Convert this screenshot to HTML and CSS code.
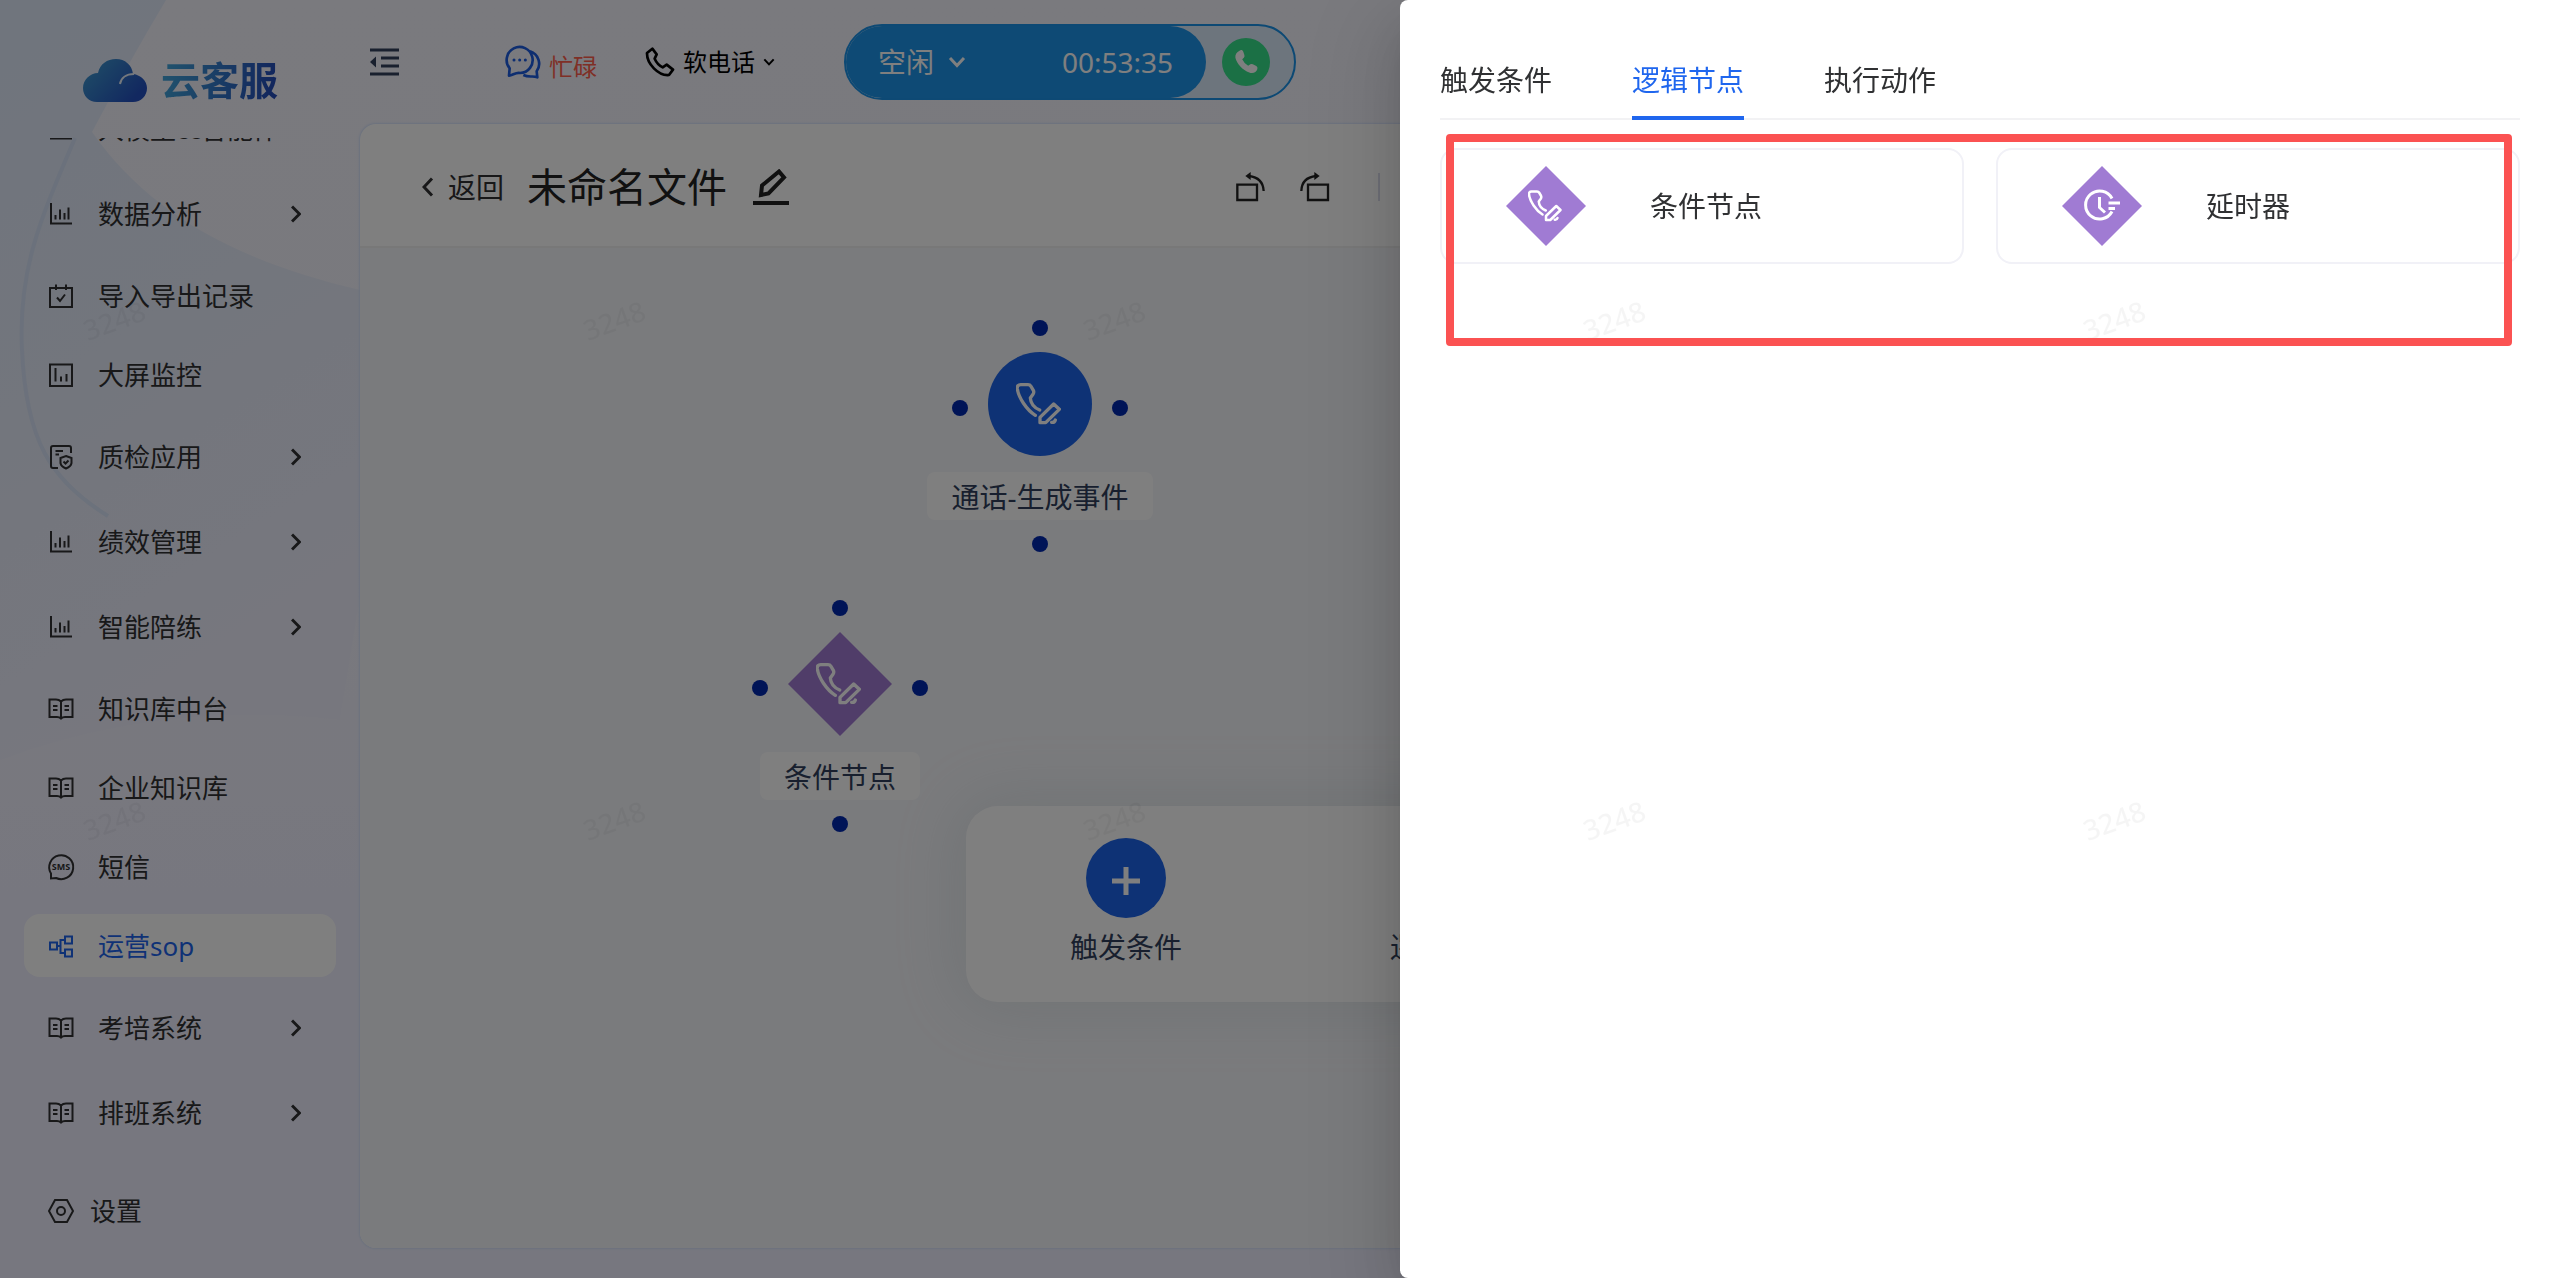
FILE: index.html
```html
<!DOCTYPE html>
<html lang="zh-CN">
<head>
<meta charset="utf-8">
<title>云客服</title>
<link rel="stylesheet" href="styles.css">
</head>
<body>
<svg class="symbols" aria-hidden="true">
  <symbol id="i-chart" viewBox="0 0 26 26"><path d="M3 2V22.500H24M7.500 18.500V14M12 18.500V8.500M16.500 18.500V12M20.500 18.500V6.500"/></symbol>
  <symbol id="i-calendar" viewBox="0 0 26 26"><path d="M2 5H24V24H2ZM8 1.500V7M18 1.500V7M9 14.500L12 18L17 11.500"/></symbol>
  <symbol id="i-screen" viewBox="0 0 26 26"><path d="M2 2.500H24V24H2ZM7.500 6V19.500M13 14.500V19.500M18.500 12V19.500"/></symbol>
  <symbol id="i-quality" viewBox="0 0 26 26"><path d="M10 24H5Q3 24 3 22V4Q3 2 5 2H21Q23 2 23 4V9M7.500 7H15M7.500 10.500H11M18 12L23.500 14V19Q23 22.500 18 24.500Q13 22.500 12.500 19V14ZM15.500 17.500L17.500 19.500L20.500 16.500"/></symbol>
  <symbol id="i-book" viewBox="0 0 26 26"><path d="M13 5.500C11.500 4 10 3.500 8 3.500H1.500V21H9C11 21 12 21.500 13 22.500C14 21.500 15 21 17 21H24.500V3.500H18C16 3.500 14.500 4 13 5.500ZM13 5.500V22M5 10H9.500M5 14H9.500M16.500 10H21M16.500 14H21"/></symbol>
  <symbol id="i-flow" viewBox="0 0 26 26"><path d="M2 9.500H9V16.500H2ZM17 3.500H24V10.500H17ZM17 16.500H24V23.500H17ZM9 13H12.500M17 7H12.500V20H17"/></symbol>
  <symbol id="i-setting" viewBox="0 0 26 26"><path d="M7 2H19L25 13L19 24H7L1 13ZM13 9A4 4 0 1 1 13 17A4 4 0 1 1 13 9Z"/></symbol>
  <symbol id="i-right" viewBox="0 0 10 18"><path d="M1 1.500L8.500 9L1 16.500"/></symbol>
  <symbol id="i-down" viewBox="0 0 18 12"><path d="M2 2L9 9.500L16 2"/></symbol>
  <symbol id="i-call-edit" viewBox="78 60 144 144"><path d="M136 166C110 150 85 112 82 86Q81 74 92 74H114Q120 74 123 79L130 91Q133 97 129 103L121 114C122 130 132 143 149 150M150 188V172L191 132L208 148L167 188ZM185 187Q194 188 196 180"/></symbol>
  <symbol id="i-delay" viewBox="0 0 36 36"><path d="M28 10.500A14 14 0 1 0 28 23.500M24.500 15H36M24.500 20.500H31M15.500 9V19.500L21 24.500"/></symbol>
</svg>

<svg class="backdrop" viewBox="0 0 360 1278" preserveAspectRatio="xMinYMin slice" aria-hidden="true">
  <defs>
    <linearGradient id="sky" x1="0" y1="0" x2=".3" y2="1">
      <stop offset="0" stop-color="#e0eafa"/><stop offset=".5" stop-color="#e6ecfa"/><stop offset="1" stop-color="#efeffd"/>
    </linearGradient>
  </defs>
  <path d="M0 0H166Q130 60 92 132C150 215 240 262 360 290V596L340 720Q160 700 0 760Z" fill="url(#sky)"/>
  <path d="M75 138C40 220 18 270 22 350C26 440 50 480 108 516" fill="none" stroke="#d2dff6" stroke-width="4" opacity=".7"/>
</svg>

<div class="app">
  <aside class="sidebar">
    <div class="brand">
      <svg class="brand-logo" viewBox="0 0 64 43" aria-hidden="true">
        <defs><linearGradient id="cloud" x1="0" y1="0" x2="1" y2=".6"><stop offset="0" stop-color="#40a0d0"/><stop offset="1" stop-color="#2450c0"/></linearGradient></defs>
        <path fill="url(#cloud)" d="M14 43C6 43 0 37 0 29C0 21 7 14 15 14C17 5 24 0 33 0C42 0 49 6 50 15C58 16 64 22 64 29C64 37 58 43 50 43Z"/>
        <path fill="none" stroke="#e8f0fa" stroke-width="2" d="M37 25C38 19 43 15 51 15"/>
      </svg>
      <span class="brand-name">云客服</span>
    </div>
    <nav class="menu" aria-label="主菜单">
      <div class="menu-list">
        <a class="item sub" href="#"><svg class="icon"><use href="#i-chart"/></svg><span>大模型cc智能体</span></a>
        <a class="item sub" href="#"><svg class="icon"><use href="#i-chart"/></svg><span>数据分析</span><svg class="arrow"><use href="#i-right"/></svg></a>
        <a class="item" href="#"><svg class="icon"><use href="#i-calendar"/></svg><span>导入导出记录</span></a>
        <a class="item" href="#"><svg class="icon"><use href="#i-screen"/></svg><span>大屏监控</span></a>
        <a class="item sub" href="#"><svg class="icon"><use href="#i-quality"/></svg><span>质检应用</span><svg class="arrow"><use href="#i-right"/></svg></a>
        <a class="item sub" href="#"><svg class="icon"><use href="#i-chart"/></svg><span>绩效管理</span><svg class="arrow"><use href="#i-right"/></svg></a>
        <a class="item sub" href="#"><svg class="icon"><use href="#i-chart"/></svg><span>智能陪练</span><svg class="arrow"><use href="#i-right"/></svg></a>
        <a class="item" href="#"><svg class="icon"><use href="#i-book"/></svg><span>知识库中台</span></a>
        <a class="item" href="#"><svg class="icon"><use href="#i-book"/></svg><span>企业知识库</span></a>
        <a class="item" href="#"><svg class="icon" viewBox="0 0 26 26"><path d="M3 19.500A12 12 0 1 1 8 24L3 24.500Z"/><text class="sms-text" x="13" y="16" text-anchor="middle">SMS</text></svg><span>短信</span></a>
        <a class="item active" href="#" aria-current="page"><svg class="icon"><use href="#i-flow"/></svg><span>运营sop</span></a>
        <a class="item sub" href="#"><svg class="icon"><use href="#i-book"/></svg><span>考培系统</span><svg class="arrow"><use href="#i-right"/></svg></a>
        <a class="item sub" href="#"><svg class="icon"><use href="#i-book"/></svg><span>排班系统</span><svg class="arrow"><use href="#i-right"/></svg></a>
      </div>
    </nav>
    <a class="item settings" href="#"><svg class="icon"><use href="#i-setting"/></svg><span>设置</span></a>
  </aside>

  <div class="main">
    <header class="topbar">
      <button class="plain" type="button" aria-label="收起菜单">
        <svg class="fold" viewBox="0 0 30 28"><path class="line" d="M0 2H29M11 10H29M11 18H29M0 26H29"/><path d="M0 14L6 8.500V19.500Z"/></svg>
      </button>
      <button class="plain chat" type="button">
        <svg class="chat-icon" viewBox="40 40 108 108"><path d="M55 135L57 113A39 39 0 1 1 88 127C76 124 66 134 55 135ZM118 62A39 39 0 0 1 138 122L140 140C126 134 116 142 98 133"/><path class="dots" d="M70 88H70.100M87 88H87.100M104 88H104.100"/></svg>
        <span>忙碌</span>
      </button>
      <button class="plain phone" type="button">
        <svg class="phone-icon" viewBox="465 45 90 90"><path d="M487 50L500 67L494 80Q502 98 518 106L530 98L549 113L537 129C505 132 470 95 471 63Z"/></svg>
        <span>软电话</span>
        <svg class="caret"><use href="#i-down"/></svg>
      </button>
      <div class="dialer">
        <button class="status" type="button">
          <span>空闲</span>
          <svg class="status-caret"><use href="#i-down"/></svg>
          <time>00:53:35</time>
        </button>
        <button class="call" type="button" aria-label="拨打">
          <svg viewBox="0 0 24 24"><path d="M6 1.500C7.500 .500 9 1 9.500 2.500L10.500 5.500Q11 7 10 8L8.500 9.500Q10 13 14 15.500L16 14Q17 13.500 18.300 14L21.500 15.700Q23 16.700 22.500 18.500C21.500 21.500 18.500 23 15 21.700C9 19.500 3.500 13.500 2.200 8C1.800 5 3.500 2.800 6 1.500Z"/></svg>
        </button>
      </div>
    </header>

    <main class="panel">
      <div class="panel-head">
        <button class="plain back" type="button"><svg viewBox="0 0 12 20"><path d="M10 1.500L2 10L10 18.500"/></svg><span>返回</span></button>
        <h1>未命名文件</h1>
        <button class="plain rename" type="button" aria-label="重命名"><svg viewBox="0 0 36 36"><path d="M8 26L9 16.500L26 2.500L31 8.500L15.500 24.500ZM0 34H36"/></svg></button>
        <div class="tools">
          <button class="plain" type="button" aria-label="撤销"><svg viewBox="100 30 96 96"><path d="M107 71H166V117H107ZM142 45Q184 50 186 90"/><path class="solid" d="M131 45L147 33V57Z"/></svg></button>
          <button class="plain" type="button" aria-label="重做"><svg viewBox="290 30 96 96"><path d="M320 71H380V117H320ZM344 45Q301 50 300 90"/><path class="solid" d="M355 45L339 33V57Z"/></svg></button>
        </div>
      </div>
      <div class="canvas">
        <div class="node node-trigger">
          <i class="port top"></i><i class="port left"></i><i class="port right"></i><i class="port bottom"></i>
          <div class="shape circle"><svg><use href="#i-call-edit"/></svg></div>
          <span class="label">通话-生成事件</span>
        </div>
        <div class="node node-logic">
          <i class="port top"></i><i class="port left"></i><i class="port right"></i><i class="port bottom"></i>
          <div class="shape diamond"><svg><use href="#i-call-edit"/></svg></div>
          <span class="label">条件节点</span>
        </div>
        <div class="dock">
          <button class="dock-item" type="button"><span class="plus"><svg viewBox="0 0 28 28"><path d="M0 14H28M14 0V28"/></svg></span>触发条件</button>
          <button class="dock-item" type="button"><span class="plus"><svg viewBox="0 0 28 28"><path d="M0 14H28M14 0V28"/></svg></span>逻辑节点</button>
          <button class="dock-item" type="button"><span class="plus"><svg viewBox="0 0 28 28"><path d="M0 14H28M14 0V28"/></svg></span>执行动作</button>
        </div>
      </div>
    </main>
  </div>
</div>

<div class="mask"></div>

<section class="drawer" role="dialog" aria-label="节点">
  <div class="tabs" role="tablist">
    <button class="tab" type="button" role="tab" aria-selected="false">触发条件</button>
    <button class="tab selected" type="button" role="tab" aria-selected="true">逻辑节点</button>
    <button class="tab" type="button" role="tab" aria-selected="false">执行动作</button>
  </div>
  <div class="cards">
    <button class="card" type="button"><span class="gem"><svg><use href="#i-call-edit"/></svg></span>条件节点</button>
    <button class="card" type="button"><span class="gem"><svg class="delay"><use href="#i-delay"/></svg></span>延时器</button>
  </div>
</section>

<div class="watermark" aria-hidden="true">
  <span>3248</span><span>3248</span><span>3248</span><span>3248</span><span>3248</span>
  <span>3248</span><span>3248</span><span>3248</span><span>3248</span><span>3248</span>
</div>
<div class="highlight"></div>
</body>
</html>
```
FILE: styles.css
```css
* { box-sizing: border-box; }

body {
  margin: 0;
  height: 100vh;
  overflow: hidden;
  background: linear-gradient(180deg, #f4f4fd 0, #f3f3fc 40%, #efeffe 70%);
  color: #303133;
  font-family: "Noto Sans", "Noto Sans CJK SC", sans-serif;
  font-size: 28px;
  line-height: 40px;
}

svg { display: block; fill: none; stroke: currentColor; }
button { font: inherit; color: inherit; cursor: pointer; }
a { color: inherit; text-decoration: none; }
.symbols { position: absolute; width: 0; height: 0; }
.backdrop { position: absolute; left: 0; top: 0; width: 360px; height: 100%; stroke: none; z-index: -1; }

.plain {
  display: flex;
  align-items: center;
  padding: 0;
  border: 0;
  background: none;
}

.app { display: flex; height: 100vh; }

/* sidebar */
.sidebar { display: flex; flex-direction: column; flex: none; width: 360px; }
.brand { display: flex; align-items: center; flex: none; gap: 14px; height: 138px; padding: 22px 0 0 83px; }
.brand-logo { width: 64px; height: 43px; stroke: none; }
.brand-name {
  font-size: 39px;
  font-weight: 600;
  background: linear-gradient(100deg, #42a8dc, #2348b8);
  -webkit-background-clip: text;
  background-clip: text;
  color: transparent;
}
.menu { flex: none; overflow: hidden; }
.menu-list { display: flex; flex-direction: column; margin-top: -52px; }
.item {
  display: flex;
  align-items: center;
  gap: 24px;
  height: 63px;
  margin: 8px 24px;
  padding: 0 35px 0 24px;
  border-radius: 16px;
  font-size: 26px;
}
.menu-list .sub { height: 69px; }
.item.active { background: #fff; color: #1f64ec; }
.icon { width: 26px; height: 26px; stroke-width: 2; overflow: visible; }
.arrow { width: 10px; height: 18px; margin-left: auto; stroke-width: 3; }
.sms-text { font-size: 9px; font-weight: 700; line-height: 12px; fill: currentColor; stroke: none; }
.settings { gap: 16px; margin-top: 24px; }

/* top bar */
.main { display: flex; flex: 1; flex-direction: column; min-width: 0; padding: 0 28px 30px 0; }
.topbar { display: flex; align-items: center; flex: none; height: 124px; padding-left: 10px; font-size: 24px; }
.fold { width: 30px; height: 28px; fill: #33415c; stroke: none; }
.fold .line { stroke: #33415c; stroke-width: 3; }
.chat { align-items: flex-end; gap: 9px; margin-left: 104px; color: #ff5f4d; line-height: 26px; }
.chat-icon { width: 36px; height: 36px; overflow: visible; color: #1c5ce0; stroke-width: 8; stroke-linejoin: round; }
.dots { stroke-width: 9; stroke-linecap: round; }
.phone { gap: 8px; margin-left: 48px; color: #000; }
.phone-icon { width: 30px; height: 30px; stroke-width: 8; stroke-linejoin: round; }
.caret { width: 12px; height: 8px; stroke-width: 3; }
.dialer {
  display: flex;
  align-items: center;
  width: 452px;
  height: 76px;
  margin-left: 69px;
  border: 2px solid #1a92e8;
  border-radius: 38px;
  background: #dbebfb;
}
.status {
  display: flex;
  align-items: center;
  width: 360px;
  height: 100%;
  padding: 0 33px 0 32px;
  border: 0;
  border-radius: 36px;
  background: #1c94ea;
  color: #fff;
  font-size: 28px;
}
.status-caret { width: 18px; height: 12px; margin-left: 14px; stroke-width: 3; }
.status time { margin-left: auto; }
.call {
  display: grid;
  place-items: center;
  width: 48px;
  height: 48px;
  margin-left: 16px;
  padding: 0;
  border: 0;
  border-radius: 50%;
  background: #36e08a;
}
.call svg { width: 26px; height: 26px; fill: #fff; stroke: none; }

/* editor panel */
.panel {
  display: flex;
  flex: 1;
  flex-direction: column;
  overflow: hidden;
  border-radius: 16px;
  background: #fff;
  box-shadow: 0 0 2px 1px #d5e2fb;
}
.panel-head {
  display: flex;
  align-items: center;
  flex: none;
  height: 124px;
  padding: 4px 62px 0;
  border-bottom: 2px solid #f0f0f0;
}
.back { gap: 14px; }
.back svg { width: 12px; height: 20px; stroke-width: 3; }
h1 { margin: 0 26px 0 23px; font-size: 40px; font-weight: 400; line-height: 56px; color: #222; }
.rename svg { width: 36px; height: 36px; stroke-width: 4; color: #222; }
.tools {
  display: flex;
  align-items: center;
  gap: 31px;
  height: 28px;
  margin-left: auto;
  margin-right: 1090px;
  padding-right: 48px;
  border-right: 2px solid #dadcec;
  color: #222;
}
.tools svg { width: 32px; height: 32px; stroke-width: 7; }
.tools .solid { fill: currentColor; stroke: none; }

.canvas { position: relative; flex: 1; background: #f5f6fa; color: #303f5c; }
.node {
  position: absolute;
  display: flex;
  flex-direction: column;
  align-items: center;
  gap: 16px;
  width: 160px;
  height: 216px;
  padding-top: 24px;
}
.node-trigger { left: 600px; top: 80px; }
.node-logic { left: 400px; top: 360px; }
.shape { display: grid; place-items: center; flex: none; width: 104px; height: 104px; color: #fff; }
.shape svg { width: 48px; height: 48px; stroke-width: 10; stroke-linecap: round; stroke-linejoin: round; }
.circle { border-radius: 50%; background: #1c64ea; }
.diamond { background: #a07bd3; clip-path: polygon(50% 0, 100% 50%, 50% 100%, 0 50%); }
.label { flex: none; height: 48px; padding: 0 24px; border-radius: 8px; background: #fff; line-height: 50px; white-space: nowrap; }
.port { position: absolute; width: 16px; height: 16px; border-radius: 50%; background: #0028ae; }
.port.top { left: 72px; top: -8px; }
.port.bottom { left: 72px; bottom: -8px; }
.port.left { left: -8px; top: 72px; }
.port.right { right: -8px; top: 72px; }

.dock {
  position: absolute;
  left: 50%;
  bottom: 246px;
  display: flex;
  width: 960px;
  margin-left: -480px;
  padding: 32px 0 35px;
  border-radius: 32px;
  background: #fff;
  box-shadow: 0 0 64px 8px rgba(150, 175, 175, .2);
}
.dock-item {
  display: flex;
  flex: 1;
  flex-direction: column;
  align-items: center;
  gap: 9px;
  padding: 0;
  border: 0;
  background: none;
}
.plus { display: grid; place-items: center; width: 80px; height: 80px; padding-top: 6px; border-radius: 50%; background: #1c64ea; color: #fff; }
.plus svg { width: 28px; height: 28px; stroke-width: 5; }

/* drawer */
.mask { position: fixed; inset: 0; background: rgba(0, 0, 0, .5); }
.drawer {
  position: fixed;
  top: 0;
  right: 0;
  bottom: 0;
  width: 1160px;
  padding: 40px 40px 0;
  border-radius: 8px 0 0 8px;
  background: #fff;
  box-shadow: 0 32px 96px 32px rgba(0, 0, 0, .08), 0 24px 64px rgba(0, 0, 0, .12), 0 16px 32px -16px rgba(0, 0, 0, .16);
}
.tabs { display: flex; gap: 80px; height: 80px; box-shadow: inset 0 -2px #f2f2f4; }
.tab { height: 80px; padding: 4px 0 0; border: 0; border-bottom: 4px solid transparent; background: none; line-height: 72px; }
.tab.selected { border-bottom-color: #1f66ee; color: #1f66ee; }
.cards { display: grid; grid-template-columns: 1fr 1fr; gap: 32px; margin-top: 28px; }
.card {
  display: flex;
  align-items: center;
  gap: 64px;
  height: 116px;
  padding: 0 64px;
  border: 2px solid #f1f1f7;
  border-radius: 16px;
  background: #fff;
}
.gem {
  display: grid;
  place-items: center;
  width: 80px;
  height: 80px;
  background: #a07bd3;
  clip-path: polygon(50% 0, 100% 50%, 50% 100%, 0 50%);
  color: #fff;
}
.gem svg { width: 36px; height: 36px; stroke-width: 10; stroke-linecap: round; stroke-linejoin: round; }
.gem .delay { stroke-width: 3; stroke-linecap: butt; }

.watermark {
  position: fixed;
  left: -136px;
  top: 70px;
  display: grid;
  grid-template-columns: repeat(5, 500px);
  grid-auto-rows: 500px;
  place-items: center;
  pointer-events: none;
  color: rgba(0, 0, 0, .04);
  font-size: 28px;
  font-weight: 500;
}
.watermark span { transform: rotate(-20deg); }
.highlight {
  position: fixed;
  top: 134px;
  right: 48px;
  width: 1066px;
  height: 212px;
  border: 8px solid #fb5252;
  border-radius: 4px;
  pointer-events: none;
}
```
